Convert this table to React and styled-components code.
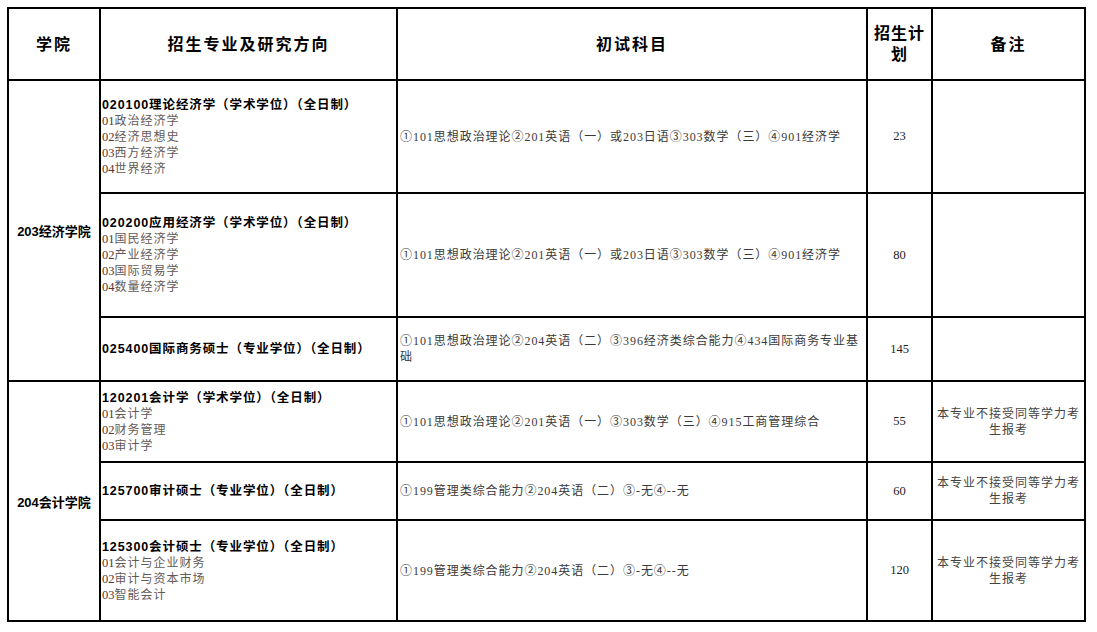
import React from "react";
import styled, { createGlobalStyle } from "styled-components";

const GlobalStyle = createGlobalStyle`
  html, body {
    margin: 0;
    padding: 0;
    background: #fff;
  }
  body {
    font-family: "Liberation Serif", "Noto Sans CJK SC", serif;
  }
`;

const columns = [92, 297, 470, 65, 153];

const schools = [
  {
    name: "203经济学院",
    rows: [
      {
        height: 113,
        title: "020100理论经济学（学术学位）（全日制）",
        directions: ["01政治经济学", "02经济思想史", "03西方经济学", "04世界经济"],
        exam: "①101思想政治理论②201英语（一）或203日语③303数学（三）④901经济学",
        plan: "23",
        note: "",
      },
      {
        height: 124,
        title: "020200应用经济学（学术学位）（全日制）",
        directions: ["01国民经济学", "02产业经济学", "03国际贸易学", "04数量经济学"],
        exam: "①101思想政治理论②201英语（一）或203日语③303数学（三）④901经济学",
        plan: "80",
        note: "",
      },
      {
        height: 64,
        title: "025400国际商务硕士（专业学位）（全日制）",
        directions: [],
        exam: "①101思想政治理论②204英语（二）③396经济类综合能力④434国际商务专业基础",
        plan: "145",
        note: "",
      },
    ],
  },
  {
    name: "204会计学院",
    rows: [
      {
        height: 81,
        title: "120201会计学（学术学位）（全日制）",
        directions: ["01会计学", "02财务管理", "03审计学"],
        exam: "①101思想政治理论②201英语（一）③303数学（三）④915工商管理综合",
        plan: "55",
        note: "本专业不接受同等学力考生报考",
      },
      {
        height: 58,
        title: "125700审计硕士（专业学位）（全日制）",
        directions: [],
        exam: "①199管理类综合能力②204英语（二）③-无④--无",
        plan: "60",
        note: "本专业不接受同等学力考生报考",
      },
      {
        height: 101,
        title: "125300会计硕士（专业学位）（全日制）",
        directions: ["01会计与企业财务", "02审计与资本市场", "03智能会计"],
        exam: "①199管理类综合能力②204英语（二）③-无④--无",
        plan: "120",
        note: "本专业不接受同等学力考生报考",
      },
    ],
  },
];

function Direction({ text }) {
  const code = text.slice(0, 2);
  const label = text.slice(2);
  return (
    <DirectionLine>
      <DirectionCode>{code}</DirectionCode>
      {label}
    </DirectionLine>
  );
}

export default function App() {
  return (
    <>
      <GlobalStyle />
      <Page>
        <Table>
          <colgroup>
            {columns.map((w, i) => (
              <col key={i} style={{ width: w }} />
            ))}
          </colgroup>
          <thead>
            <Row $height={72}>
              <HeadCell>学院</HeadCell>
              <HeadCell>招生专业及研究方向</HeadCell>
              <HeadCell>初试科目</HeadCell>
              <HeadCell $narrow>招生计划</HeadCell>
              <HeadCell>备注</HeadCell>
            </Row>
          </thead>
          <tbody>
            {schools.map((school) =>
              school.rows.map((row, i) => (
                <Row key={row.title} $height={row.height}>
                  {i === 0 && (
                    <SchoolCell rowSpan={school.rows.length}>{school.name}</SchoolCell>
                  )}
                  <MajorCell>
                    <MajorTitle>{row.title}</MajorTitle>
                    {row.directions.map((d) => (
                      <Direction key={d} text={d} />
                    ))}
                  </MajorCell>
                  <ExamCell>{row.exam}</ExamCell>
                  <PlanCell>{row.plan}</PlanCell>
                  <NoteCell>{row.note}</NoteCell>
                </Row>
              ))
            )}
          </tbody>
        </Table>
      </Page>
    </>
  );
}

const Page = styled.div`
  padding: 7px 0 0 7px;
`;

const Table = styled.table`
  border-collapse: collapse;
  table-layout: fixed;
  width: 1078px;
  border: 2px solid #000;
`;

const Row = styled.tr`
  height: ${({ $height }) => $height}px;
`;

const Cell = styled.td`
  border: 2px solid #000;
  padding: 0 2px;
  vertical-align: middle;
`;

const HeadCell = styled.th`
  border: 2px solid #000;
  padding: 0 ${({ $narrow }) => ($narrow ? "6px" : "2px")};
  vertical-align: middle;
  text-align: center;
  font-family: "Liberation Sans", "Noto Sans CJK SC", sans-serif;
  font-weight: 700;
  font-size: 16px;
  line-height: 21px;
  letter-spacing: ${({ $narrow }) => ($narrow ? "1px" : "2px")};
  color: #000;
`;

const SchoolCell = styled(Cell)`
  text-align: center;
  font-family: "Liberation Sans", "Noto Sans CJK SC", sans-serif;
  font-weight: 700;
  font-size: 13px;
  color: #000;
`;

const MajorCell = styled(Cell)`
  padding: 0 1px;
  text-align: left;
`;

const MajorTitle = styled.div`
  font-family: "Liberation Sans", "Noto Sans CJK SC", sans-serif;
  font-weight: 700;
  font-size: 12.5px;
  line-height: 16px;
  letter-spacing: 0.9px;
  color: #000;
  white-space: nowrap;
`;

const DirectionLine = styled.div`
  font-size: 12px;
  line-height: 16px;
  letter-spacing: 1px;
  color: #635a58;
  white-space: nowrap;
`;

const DirectionCode = styled.span`
  font-size: 12.5px;
  color: #5a3530;
  letter-spacing: 0;
`;

const ExamCell = styled(Cell)`
  font-size: 12px;
  line-height: 16px;
  letter-spacing: 0.95px;
  color: #3a3a3a;
  text-align: left;
`;

const PlanCell = styled(Cell)`
  font-size: 12.5px;
  color: #222;
  text-align: center;
`;

const NoteCell = styled(Cell)`
  padding: 0 4px;
  font-size: 12px;
  line-height: 16px;
  letter-spacing: 1px;
  color: #444;
  text-align: center;
`;
